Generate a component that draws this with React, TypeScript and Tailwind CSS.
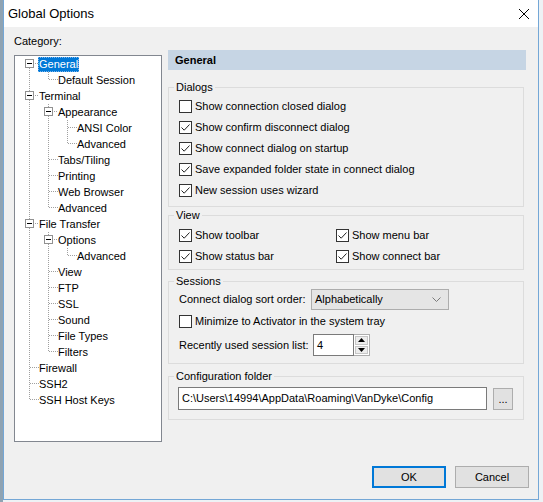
import React from "react";

type Cell = "pipe" | "tee" | "elbow" | "boxDown" | "boxBoth";

type TreeRow = {
  label: string;
  cells: Cell[];
  selected?: boolean;
};

const treeRows: TreeRow[] = [
  { label: "General", cells: ["boxDown"], selected: true },
  { label: "Default Session", cells: ["pipe", "elbow"] },
  { label: "Terminal", cells: ["boxBoth"] },
  { label: "Appearance", cells: ["pipe", "boxBoth"] },
  { label: "ANSI Color", cells: ["pipe", "pipe", "tee"] },
  { label: "Advanced", cells: ["pipe", "pipe", "elbow"] },
  { label: "Tabs/Tiling", cells: ["pipe", "tee"] },
  { label: "Printing", cells: ["pipe", "tee"] },
  { label: "Web Browser", cells: ["pipe", "tee"] },
  { label: "Advanced", cells: ["pipe", "elbow"] },
  { label: "File Transfer", cells: ["boxBoth"] },
  { label: "Options", cells: ["pipe", "boxBoth"] },
  { label: "Advanced", cells: ["pipe", "pipe", "elbow"] },
  { label: "View", cells: ["pipe", "tee"] },
  { label: "FTP", cells: ["pipe", "tee"] },
  { label: "SSL", cells: ["pipe", "tee"] },
  { label: "Sound", cells: ["pipe", "tee"] },
  { label: "File Types", cells: ["pipe", "tee"] },
  { label: "Filters", cells: ["pipe", "elbow"] },
  { label: "Firewall", cells: ["tee"] },
  { label: "SSH2", cells: ["tee"] },
  { label: "SSH Host Keys", cells: ["elbow"] },
];

const dot = "#a0a0a0";

function Guide({ kind }: { kind: Cell }) {
  const isBox = kind === "boxDown" || kind === "boxBoth";
  return (
    <svg width="19" height="16" className="shrink-0" shapeRendering="crispEdges">
      {!isBox && (
        <line
          x1="9.5"
          y1="0"
          x2="9.5"
          y2={kind === "elbow" ? 8 : 16}
          stroke={dot}
          strokeDasharray="1 1"
        />
      )}
      {(kind === "tee" || kind === "elbow") && (
        <line x1="10" y1="7.5" x2="19" y2="7.5" stroke={dot} strokeDasharray="1 1" />
      )}
      {isBox && (
        <>
          {kind === "boxBoth" && (
            <line x1="9.5" y1="0" x2="9.5" y2="3" stroke={dot} strokeDasharray="1 1" />
          )}
          <line x1="9.5" y1="12" x2="9.5" y2="16" stroke={dot} strokeDasharray="1 1" />
          <line x1="15" y1="7.5" x2="19" y2="7.5" stroke={dot} strokeDasharray="1 1" />
          <rect x="5.5" y="3.5" width="8" height="8" fill="#ffffff" stroke="#919191" />
          <line x1="7" y1="7.5" x2="12" y2="7.5" stroke="#000000" />
        </>
      )}
    </svg>
  );
}

function Check({ checked }: { checked: boolean }) {
  return (
    <span className="flex h-[13px] w-[13px] shrink-0 items-center justify-center border border-[#333333] bg-white">
      {checked && (
        <svg width="11" height="11" viewBox="0 0 11 11">
          <path d="M1.5 5.5 L4.2 8.2 L9.5 2.5" fill="none" stroke="#222222" strokeWidth="1" />
        </svg>
      )}
    </span>
  );
}

function CheckRow({ label, checked }: { label: string; checked: boolean }) {
  return (
    <div className="flex h-[21px] items-center gap-[3px]">
      <Check checked={checked} />
      <span className="whitespace-nowrap">{label}</span>
    </div>
  );
}

function Group({
  title,
  className,
  children,
}: {
  title: string;
  className: string;
  children: React.ReactNode;
}) {
  return (
    <fieldset className={`w-[356px] border border-[#dcdcdc] ${className}`}>
      <legend className="ml-[5px] px-[2px] leading-4">{title}</legend>
      {children}
    </fieldset>
  );
}

export default function App() {
  return (
    <div className="flex h-[502px] w-[543px] overflow-hidden bg-[#eef2f5] font-['Liberation_Sans',Arial,sans-serif] text-[11px] text-black">
      <div className="h-full w-[3px] bg-[#8fa3b3]" />
      <div className="flex h-[500px] w-[536px] flex-col border-x border-b border-[#74a7d6] bg-[#f0f0f0]">
        {/* title bar */}
        <div className="flex h-[27px] items-center justify-between bg-white pl-[4px] pr-[7px]">
          <span className="text-[13px]">Global Options</span>
          <svg width="12" height="12" viewBox="0 0 12 12" className="mr-[1px]">
            <path d="M1 1 L11 11 M11 1 L1 11" stroke="#000000" strokeWidth="1" />
          </svg>
        </div>

        <div className="flex pl-[10px]">
          {/* category tree */}
          <div className="flex w-[148px] flex-col pt-[6px]">
            <div className="h-4 leading-4">Category:</div>
            <div className="mt-[6px] h-[387px] border border-[#828790] bg-white pl-[5px]">
              {treeRows.map((row, i) => (
                <div key={i} className="flex h-4 items-center">
                  {row.cells.map((c, j) => (
                    <Guide key={j} kind={c} />
                  ))}
                  <span
                    className={`-ml-px h-[15px] whitespace-nowrap px-px leading-[15px] ${
                      row.selected
                        ? "bg-[#0078d7] text-white outline-1 -outline-offset-1 outline-dotted outline-[#7fb6ea]"
                        : ""
                    }`}
                  >
                    {row.label}
                  </span>
                </div>
              ))}
            </div>
          </div>

          {/* settings pane */}
          <div className="ml-[6px] flex w-[358px] flex-col pt-[23px]">
            <div className="flex h-[20px] items-center bg-[#c6d5e4] pl-[7px] font-bold">General</div>

            <Group title="Dialogs" className="mt-[9px] h-[128px]">
              <div className="pl-[10px] pt-[1px]">
                <CheckRow label="Show connection closed dialog" checked={false} />
                <CheckRow label="Show confirm disconnect dialog" checked />
                <CheckRow label="Show connect dialog on startup" checked />
                <CheckRow label="Save expanded folder state in connect dialog" checked />
                <CheckRow label="New session uses wizard" checked />
              </div>
            </Group>

            <Group title="View" className="h-[63px]">
              <div className="grid grid-cols-[157px_1fr] pl-[10px] pt-[2px]">
                <CheckRow label="Show toolbar" checked />
                <CheckRow label="Show menu bar" checked />
                <CheckRow label="Show status bar" checked />
                <CheckRow label="Show connect bar" checked />
              </div>
            </Group>

            <Group title="Sessions" className="mt-[3px] h-[91px]">
              <div className="flex flex-col pl-[10px]">
                <div className="flex h-[21px] items-center">
                  <span className="w-[132px] whitespace-nowrap">Connect dialog sort order:</span>
                  <div className="flex h-[21px] w-[138px] items-center justify-between border border-[#adadad] bg-[#e5e5e5] pl-[3px] pr-[7px]">
                    <span>Alphabetically</span>
                    <svg width="9" height="5" viewBox="0 0 9 5">
                      <path d="M0.5 0.5 L4.5 4.5 L8.5 0.5" fill="none" stroke="#7a7a7a" />
                    </svg>
                  </div>
                </div>
                <div className="mt-[1px]">
                  <CheckRow label="Minimize to Activator in the system tray" checked={false} />
                </div>
                <div className="mt-[2px] flex h-[22px] items-center">
                  <span className="w-[134px] whitespace-nowrap">Recently used session list:</span>
                  <div className="flex h-[22px] w-[41px] items-center border border-[#7a7a7a] bg-white pl-[3px]">
                    4
                  </div>
                  <div className="flex h-[22px] w-[16px] flex-col gap-px border border-l-0 border-[#adadad] bg-white p-px">
                    <div className="flex flex-1 items-center justify-center border border-[#c6c6c6] bg-[#ececec]">
                      <svg width="7" height="4" viewBox="0 0 7 4">
                        <path d="M0 4 L3.5 0 L7 4 Z" fill="#000000" />
                      </svg>
                    </div>
                    <div className="flex flex-1 items-center justify-center border border-[#c6c6c6] bg-[#ececec]">
                      <svg width="7" height="4" viewBox="0 0 7 4">
                        <path d="M0 0 L3.5 4 L7 0 Z" fill="#000000" />
                      </svg>
                    </div>
                  </div>
                </div>
              </div>
            </Group>

            <Group title="Configuration folder" className="mt-[4px] h-[52px]">
              <div className="flex items-center gap-[6px] pl-[9px] pt-[3px]">
                <div className="flex h-[23px] w-[309px] items-center border border-[#7a7a7a] bg-white pl-[3px]">
                  C:\Users\14994\AppData\Roaming\VanDyke\Config
                </div>
                <div className="flex h-[22px] w-[20px] items-end justify-center border border-[#adadad] bg-[#e1e1e1] pb-[4px] leading-none">
                  ...
                </div>
              </div>
            </Group>
          </div>
        </div>

        {/* dialog buttons */}
        <div className="mt-auto flex justify-end gap-[9px] pb-[11px] pr-[9px]">
          <div className="flex h-[22px] w-[74px] items-center justify-center border-2 border-[#0078d7] bg-[#e1e1e1]">
            OK
          </div>
          <div className="flex h-[22px] w-[74px] items-center justify-center border border-[#adadad] bg-[#e1e1e1]">
            Cancel
          </div>
        </div>
      </div>
    </div>
  );
}
